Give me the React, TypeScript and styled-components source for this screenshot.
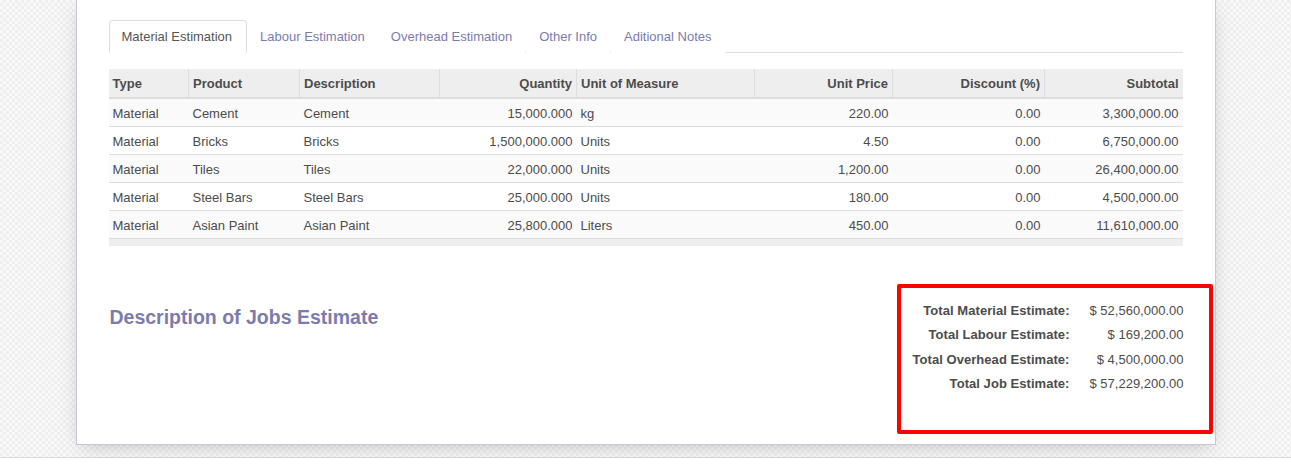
import styled, { createGlobalStyle } from 'styled-components';

const GlobalStyle = createGlobalStyle`
  html, body {
    margin: 0;
    padding: 0;
    background: #ffffff;
  }
  body {
    font-family: "Liberation Sans", Arial, sans-serif;
    font-size: 13px;
    color: #4c4c4c;
  }
  * {
    box-sizing: border-box;
  }
`;

const Backdrop = styled.div`
  padding-bottom: 12px;
  border-bottom: 1px solid #dcdcdc;
  background: repeating-conic-gradient(#eeeeee 0% 25%, #f9f9f9 0% 50%) 0 0 / 6px 6px;
`;

const Sheet = styled.div`
  width: 1140px;
  margin: 0 auto;
  padding: 20px 32px 10px;
  background: #ffffff;
  border: 1px solid #c8c8d3;
  border-top: none;
  box-shadow: 0 5px 20px -6px rgba(0, 0, 0, 0.25);
`;

const Tabs = styled.ul`
  list-style: none;
  margin: 0;
  padding: 0;
  display: flex;
  border-bottom: 1px solid #dddddd;
`;

const Tab = styled.li<{ $active?: boolean }>`
  margin: 0 0 -1px 0;
  padding: ${(p) => (p.$active ? '0 14px 0 12px' : '0 12px 0 12px')};
  height: 33px;
  line-height: 32px;
  border: 1px solid ${(p) => (p.$active ? '#dddddd' : 'transparent')};
  border-bottom-color: ${(p) => (p.$active ? '#ffffff' : 'transparent')};
  border-radius: 4px 4px 0 0;
  background: #ffffff;
  color: ${(p) => (p.$active ? '#555555' : '#7c7bad')};
  cursor: pointer;
  &:nth-child(n + 4) {
    margin-left: 1px;
  }
`;

const Table = styled.table`
  margin-top: 16px;
  width: 100%;
  table-layout: fixed;
  border-collapse: collapse;
  color: #4c4c4c;
`;

const Th = styled.th<{ $right?: boolean }>`
  padding: 6px 4px 4px;
  line-height: 18px;
  background: #eeeeee;
  font-weight: bold;
  text-align: ${(p) => (p.$right ? 'right' : 'left')};
  border-bottom: 2px solid #dcdde0;
  border-left: 1px solid #dedede;
  &:first-child {
    border-left: none;
  }
`;

const Row = styled.tr<{ $striped?: boolean }>`
  background: ${(p) => (p.$striped ? '#fafafa' : '#ffffff')};
  border-bottom: 1px solid #dddddd;
`;

const Td = styled.td<{ $right?: boolean }>`
  padding: 5px 4px 3px;
  line-height: 19px;
  text-align: ${(p) => (p.$right ? 'right' : 'left')};
  white-space: nowrap;
  overflow: hidden;
`;

const FootCell = styled.td`
  height: 7px;
  padding: 0;
  background: #eeeeee;
`;

const Bottom = styled.div`
  margin-top: 38px;
  display: flex;
  justify-content: space-between;
  align-items: flex-start;
`;

const SectionTitle = styled.h2`
  margin: 21px 0 0 1px;
  font-size: 19.5px;
  line-height: 24px;
  font-weight: bold;
  color: #7c7bad;
`;

const TotalsFrame = styled.div`
  width: 316px;
  height: 150px;
  margin-right: -30px;
  padding: 11px 25px 0 0;
  border: 4px solid #ff0000;
  border-radius: 2px;
  display: flex;
  justify-content: flex-end;
`;

const TotalsGrid = styled.dl`
  margin: 0;
  display: grid;
  grid-template-columns: auto auto;
  column-gap: 20px;
  align-content: start;
`;

const TotalLabel = styled.dt`
  margin: 0;
  font-weight: bold;
  text-align: right;
  line-height: 24.5px;
  letter-spacing: 0.05px;
`;

const TotalValue = styled.dd`
  margin: 0;
  text-align: right;
  line-height: 24.5px;
`;

const columns = [
  { label: 'Type', width: 80 },
  { label: 'Product', width: 111 },
  { label: 'Description', width: 140 },
  { label: 'Quantity', width: 137, right: true },
  { label: 'Unit of Measure', width: 178 },
  { label: 'Unit Price', width: 138, right: true },
  { label: 'Discount (%)', width: 152, right: true },
  { label: 'Subtotal', width: 138, right: true },
];

const lines = [
  ['Material', 'Cement', 'Cement', '15,000.000', 'kg', '220.00', '0.00', '3,300,000.00'],
  ['Material', 'Bricks', 'Bricks', '1,500,000.000', 'Units', '4.50', '0.00', '6,750,000.00'],
  ['Material', 'Tiles', 'Tiles', '22,000.000', 'Units', '1,200.00', '0.00', '26,400,000.00'],
  ['Material', 'Steel Bars', 'Steel Bars', '25,000.000', 'Units', '180.00', '0.00', '4,500,000.00'],
  ['Material', 'Asian Paint', 'Asian Paint', '25,800.000', 'Liters', '450.00', '0.00', '11,610,000.00'],
];

const totals = [
  ['Total Material Estimate:', '$ 52,560,000.00'],
  ['Total Labour Estimate:', '$ 169,200.00'],
  ['Total Overhead Estimate:', '$ 4,500,000.00'],
  ['Total Job Estimate:', '$ 57,229,200.00'],
];

const tabs = ['Material Estimation', 'Labour Estimation', 'Overhead Estimation', 'Other Info', 'Aditional Notes'];

const App = () => {
  return (
    <>
      <GlobalStyle />
      <Backdrop>
        <Sheet>
          <Tabs>
            {tabs.map((t, i) => (
              <Tab key={t} $active={i === 0}>
                {t}
              </Tab>
            ))}
          </Tabs>

          <Table>
            <colgroup>
              {columns.map((c) => (
                <col key={c.label} style={{ width: c.width }} />
              ))}
            </colgroup>
            <thead>
              <tr>
                {columns.map((c) => (
                  <Th key={c.label} $right={c.right}>
                    {c.label}
                  </Th>
                ))}
              </tr>
            </thead>
            <tbody>
              {lines.map((line, r) => (
                <Row key={r} $striped={r % 2 === 0}>
                  {line.map((v, i) => (
                    <Td key={i} $right={columns[i].right}>
                      {v}
                    </Td>
                  ))}
                </Row>
              ))}
            </tbody>
            <tfoot>
              <tr>
                <FootCell colSpan={8} />
              </tr>
            </tfoot>
          </Table>

          <Bottom>
            <SectionTitle>Description of Jobs Estimate</SectionTitle>
            <TotalsFrame>
              <TotalsGrid>
                {totals.flatMap(([label, value]) => [
                  <TotalLabel key={label}>{label}</TotalLabel>,
                  <TotalValue key={value}>{value}</TotalValue>,
                ])}
              </TotalsGrid>
            </TotalsFrame>
          </Bottom>
        </Sheet>
      </Backdrop>
    </>
  );
};

export default App;
